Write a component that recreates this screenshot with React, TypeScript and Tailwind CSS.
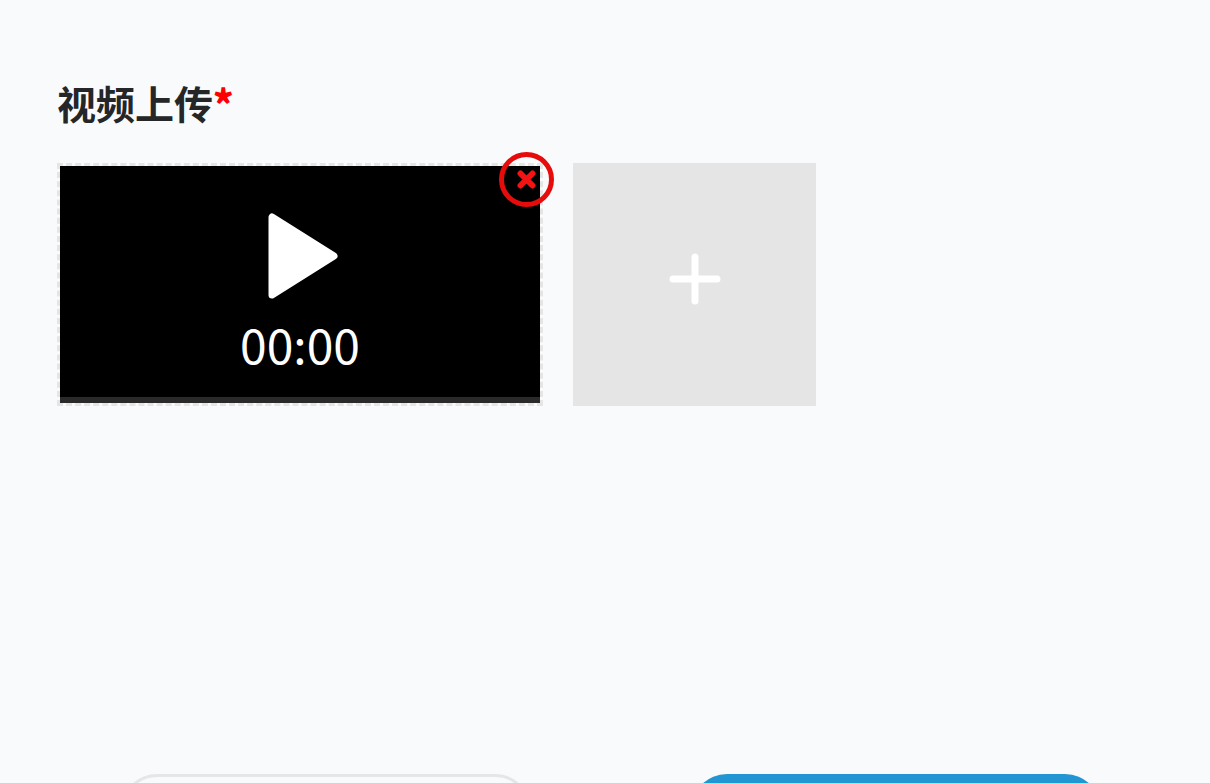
import React from "react";

function VideoPreview() {
  return (
    <div className="relative h-[243px] w-[486px] shrink-0 border-[3px] border-dashed border-[#e5e5e5]">
      <button
        type="button"
        aria-label="播放"
        className="flex h-full w-full flex-col items-center border-b-[6px] border-[#2a2a2b] bg-black text-white"
      >
        <svg viewBox="0 0 72 88" className="mt-[46px] ml-[6px] h-[88px] w-[72px]" aria-hidden="true">
          <path
            d="M5 5 V83 L67 44 Z"
            fill="currentColor"
            stroke="currentColor"
            strokeWidth="7"
            strokeLinejoin="round"
          />
        </svg>
        <span className="mt-[15px] text-[48px] leading-[56px]">00:00</span>
      </button>
      <button
        type="button"
        aria-label="删除视频"
        className="absolute -top-[14px] -right-[14px] flex size-[55px] items-center justify-center rounded-full border-[5px] border-[#e60c0c] text-[#f01414]"
      >
        <svg viewBox="0 0 19 19" className="size-[19px]" fill="none" stroke="currentColor" strokeWidth="6" strokeLinecap="round" aria-hidden="true">
          <path d="M3.5 3.5 L15.5 15.5 M15.5 3.5 L3.5 15.5" />
        </svg>
      </button>
    </div>
  );
}

export default function App() {
  return (
    <main className="flex h-screen flex-col overflow-hidden bg-[#f9fafc] font-['Noto_Sans_CJK_SC','Noto_Sans',sans-serif] text-[#242628]">
      <section className="flex-1 px-[57px] pt-[74px]">
        <h1 className="text-[39px] leading-[56px] font-bold">
          视频上传<span className="font-black text-[#ff0000]">*</span>
        </h1>
        <div className="mt-[33px] flex gap-[30px]">
          <VideoPreview />
          <button
            type="button"
            aria-label="添加视频"
            className="flex size-[243px] shrink-0 items-center justify-center bg-[#e5e5e5] pb-[11px] text-white"
          >
            <svg viewBox="0 0 52 52" className="size-[52px]" fill="none" stroke="currentColor" strokeWidth="7" strokeLinecap="round" aria-hidden="true">
              <path d="M4 26 H48 M26 4 V48" />
            </svg>
          </button>
        </div>
      </section>
      <footer className="-mb-[63px] flex shrink-0 justify-between pr-[109px] pl-[121px]">
        <button type="button" aria-label="取消" className="h-[72px] w-[410px] rounded-full border-[3px] border-[#e5e6e8]" />
        <button type="button" aria-label="提交" className="h-[72px] w-[410px] rounded-full bg-[#2196d3]" />
      </footer>
    </main>
  );
}
